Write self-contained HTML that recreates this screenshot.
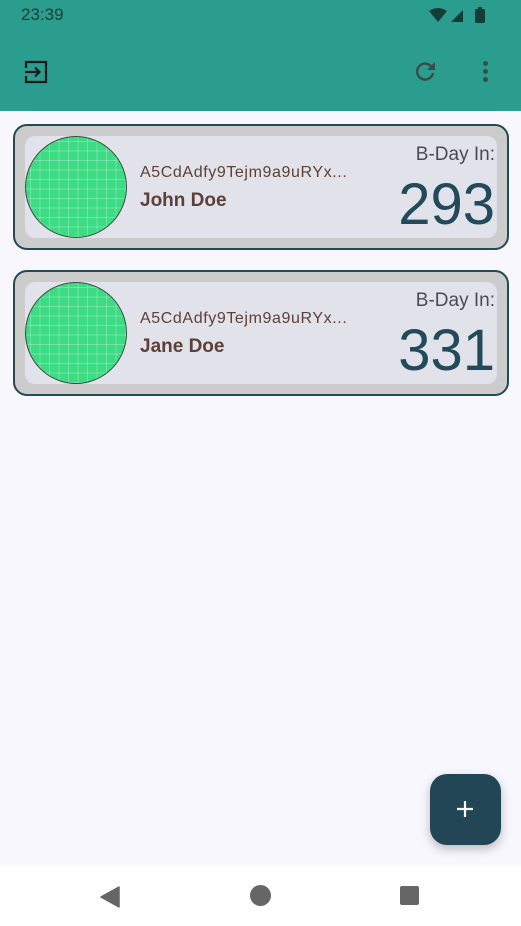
<!DOCTYPE html>
<html><head><meta charset="utf-8"><style>
*{margin:0;padding:0;box-sizing:border-box}
body{width:521px;height:926px;background:#f8f7fd;font-family:"Liberation Sans",sans-serif;position:relative;overflow:hidden}
.top{position:absolute;left:0;top:0;width:521px;height:111px;background:#2a9d8f}
.time{position:absolute;left:21px;top:5px;font-size:17px;color:#1b3d3a}
.card{position:absolute;left:13px;width:496px;height:126px;border:2.5px solid #234a55;border-radius:14px;background:#cccccc}
.inner{position:absolute;left:10px;top:10px;right:10px;bottom:10px;background:#e2e2ea;border-radius:10px}
.circ{position:absolute;left:10px;top:10px;width:102px;height:102px;border-radius:50%;border:1.3px solid #3a4a40;
background-color:#3ddc84;background-image:linear-gradient(rgba(255,255,255,.25) 1px,transparent 1px),linear-gradient(90deg,rgba(255,255,255,.25) 1px,transparent 1px);background-size:9.5px 9.5px;background-position:4px 4px}
.id{position:absolute;left:125px;top:38px;font-size:16px;color:#5d4037;letter-spacing:.6px}
.nm{position:absolute;left:125px;top:64px;font-size:19px;font-weight:bold;color:#5d4037}
.bd{position:absolute;right:12px;top:18px;font-size:19px;color:#4b4b57}
.num{position:absolute;right:12px;top:50px;font-size:58px;color:#234a5a;line-height:1}
.fab{position:absolute;left:430px;top:774px;width:71px;height:71px;border-radius:17px;background:#234656;box-shadow:0 4px 10px rgba(0,0,0,.25)}
.nav{position:absolute;left:0;top:865px;width:521px;height:61px;background:#fefefe}
</style></head><body>
<div class="top">
<div class="time">23:39</div>
<svg style="position:absolute;left:428px;top:6px" width="62" height="18" viewBox="0 0 62 18">
<path d="M1 5 Q10 -1 19 5 L10 16 Z" fill="#153d38"/>
<path d="M23 16 L35 4 L35 16 Z" fill="#153d38"/>
<rect x="47" y="3" width="10" height="14" rx="1.5" fill="#153d38"/><rect x="50" y="1" width="4" height="3" fill="#153d38"/>
</svg>
<svg style="position:absolute;left:24px;top:60px" width="24" height="24" viewBox="0 0 24 24" fill="none" stroke="#1a1a1a" stroke-width="2.2">
<path d="M2 8 V2 H22 V22 H2 V16"/><path d="M1 12 H15 M11 7.5 L15.5 12 L11 16.5"/></svg>
<svg style="position:absolute;left:413px;top:59px" width="24" height="24" viewBox="0 0 24 24">
<path d="M19 8.5 A8 8 0 1 0 20 14" fill="none" stroke="#3c4a4a" stroke-width="2.4"/><path d="M22 3 V11 H14 Z" fill="#3c4a4a"/></svg>
<div style="position:absolute;left:483px;top:61px;width:5px;height:5px;border-radius:50%;background:#3c4a4a;box-shadow:0 8px 0 #3c4a4a,0 16px 0 #3c4a4a"></div>
</div>

<div class="card" style="top:124px"><div class="inner"></div><div class="circ"></div>
<div class="id">A5CdAdfy9Tejm9a9uRYx...</div><div class="nm">John Doe</div>
<div class="bd">B-Day In:</div><div class="num">293</div></div>

<div class="card" style="top:270px"><div class="inner"></div><div class="circ"></div>
<div class="id">A5CdAdfy9Tejm9a9uRYx...</div><div class="nm">Jane Doe</div>
<div class="bd">B-Day In:</div><div class="num">331</div></div>

<div class="fab"><svg style="position:absolute;left:25px;top:25px" width="20" height="20" viewBox="0 0 20 20"><path d="M10 2 V18 M2 10 H18" stroke="#fff" stroke-width="2.2"/></svg></div>

<div class="nav">
<svg style="position:absolute;left:100px;top:21px" width="20" height="22" viewBox="0 0 20 22"><path d="M19 1 V21 L1 11 Z" fill="#666" stroke="#666" stroke-width="1.5" stroke-linejoin="round"/></svg>
<div style="position:absolute;left:250px;top:20px;width:21px;height:21px;border-radius:50%;background:#666"></div>
<div style="position:absolute;left:400px;top:21px;width:19px;height:19px;border-radius:2px;background:#666"></div>
</div>
</body></html>
